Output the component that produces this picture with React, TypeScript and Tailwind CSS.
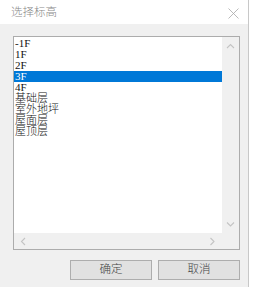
import React from "react";

const items = ["-1F", "1F", "2F", "3F", "4F", "基础层", "室外地坪", "屋面层", "屋顶层"];

function Chev({ dir }: { dir: "up" | "down" | "left" | "right" }) {
  const d =
    dir === "up"
      ? "M1 5 L4.5 1.5 L8 5"
      : dir === "down"
      ? "M1 1.5 L4.5 5 L8 1.5"
      : dir === "left"
      ? "M5 1 L1.5 4.5 L5 8"
      : "M1.5 1 L5 4.5 L1.5 8";
  const w = dir === "up" || dir === "down" ? 9 : 7;
  const h = dir === "up" || dir === "down" ? 7 : 9;
  return (
    <svg width={w} height={h} viewBox={`0 0 ${w} ${h}`}>
      <path d={d} fill="none" stroke="#c4c4c4" strokeWidth="1.1" />
    </svg>
  );
}

export default function App() {
  const font = { fontFamily: '"Liberation Serif", "Noto Sans CJK SC", serif' };
  return (
    <div className="w-[259px] h-[287px] bg-white flex">
      <div className="w-[249px] h-full flex flex-col border-r border-[#c8c8c8]">
        <div className="h-[24px] bg-white flex items-center justify-between pl-[11px] pr-[9px]">
          <span
            className="text-[11.5px] text-[#8a8a8a] font-light"
            style={{ fontFamily: '"Noto Sans CJK SC", sans-serif' }}
          >
            选择标高
          </span>
          <svg width="11" height="11" viewBox="0 0 11 11" className="mt-[2px]">
            <path d="M0.5 0.5 L10.5 10.5 M10.5 0.5 L0.5 10.5" stroke="#a8a8a8" strokeWidth="0.8" />
          </svg>
        </div>
        <div className="flex-1 bg-[#f0f0f0] flex flex-col">
          <div className="ml-[13px] mt-[12px] w-[227px] h-[214px] border border-[#acacac] bg-white flex flex-col">
            <div className="flex flex-1 min-h-0">
              <div className="flex-1 pt-[1px] text-[11px] text-[#111]" style={font}>
                {items.map((it) => (
                  <div
                    key={it}
                    className={
                      "h-[11px] leading-[11px] pl-[1px] whitespace-nowrap font-light " +
                      (it === "3F" ? "bg-[#0078d7] text-white" : "")
                    }
                  >
                    {it}
                  </div>
                ))}
              </div>
              <div className="w-[17px] bg-[#f0f0f0] flex flex-col items-center justify-between pt-[6px] pb-[5px]">
                <Chev dir="up" />
                <Chev dir="down" />
              </div>
            </div>
            <div className="h-[16px] flex">
              <div className="flex-1 bg-[#f0f0f0] flex items-center justify-between pl-[6px] pr-[6px]">
                <Chev dir="left" />
                <Chev dir="right" />
              </div>
              <div className="w-[17px] bg-[#f0f0f0]" />
            </div>
          </div>
          <div className="flex justify-end gap-[6px] mt-[10px] mr-[8px]">
            <button
              className="w-[82px] h-[20px] bg-[#e1e1e1] border border-[#adadad] text-[11.5px] text-[#444] font-light flex items-center justify-center"
              style={font}
            >
              确定
            </button>
            <button
              className="w-[82px] h-[20px] bg-[#e1e1e1] border border-[#adadad] text-[11.5px] text-[#444] font-light flex items-center justify-center"
              style={font}
            >
              取消
            </button>
          </div>
        </div>
      </div>
    </div>
  );
}
